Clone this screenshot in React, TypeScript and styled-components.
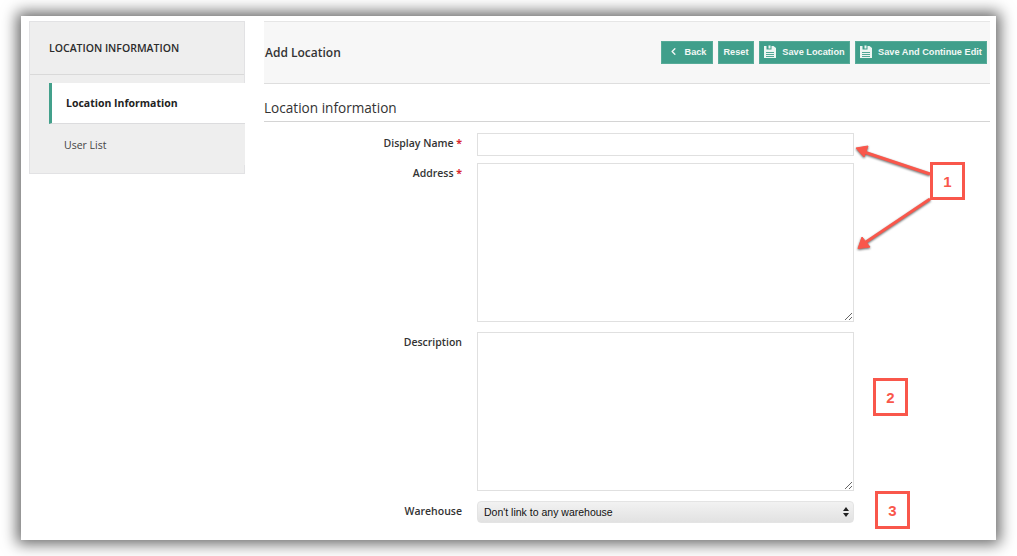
import styled, { createGlobalStyle } from "styled-components";
import { ChevronLeft } from "lucide-react";

const GlobalStyle = createGlobalStyle`
	html, body {
		margin: 0;
		padding: 0;
		background: #fff;
	}
	* {
		box-sizing: border-box;
	}
`;

const SaveIcon = () => (
	<svg width="12" height="13" viewBox="0 0 12 13" fill="none">
		<path d="M0 1h2.500v3.500h5V1h2L12 3v10H0z" fill="#eef6f3" />
		<rect x="4.500" y="0.500" width="2" height="3" fill="#eef6f3" />
		<path d="M2 7.500h8M2 9.500h8M2 11.500h8" stroke="#409f8b" strokeWidth="0.9" />
	</svg>
);

const SelectArrows = () => (
	<svg width="6" height="10" viewBox="0 0 6 10">
		<path d="M3 0l3 4H0zM3 10L0 6h6z" fill="#222" />
	</svg>
);

const Arrows = () => (
	<ArrowLayer viewBox="0 0 1017 556">
		<g fill="#f9574b" stroke="#f9574b">
			<line x1="930" y1="174" x2="864" y2="152" strokeWidth="3" />
			<path d="M856 148L868 146L864 157z" strokeWidth="1" />
			<line x1="930" y1="199" x2="866" y2="242" strokeWidth="3" />
			<path d="M858 248.500L862 237L870 247z" strokeWidth="1" />
		</g>
	</ArrowLayer>
);

const App = () => {
	return (
		<Page>
			<GlobalStyle />
			<Frame>
				<Sidebar>
					<SidebarTitle>LOCATION INFORMATION</SidebarTitle>
					<SideList>
						<SideItem $active>Location Information</SideItem>
						<SideItem>User List</SideItem>
					</SideList>
				</Sidebar>
				<Main>
					<TopBar>
						<PageTitle>Add Location</PageTitle>
						<Actions>
							<ActionButton $width={52}>
								<ChevronLeft size={11} strokeWidth={3} />
								<span>Back</span>
							</ActionButton>
							<ActionButton $width={36}>Reset</ActionButton>
							<ActionButton $width={91}>
								<SaveIcon />
								<span>Save Location</span>
							</ActionButton>
							<ActionButton $width={132}>
								<SaveIcon />
								<span>Save And Continue Edit</span>
							</ActionButton>
						</Actions>
					</TopBar>
					<SectionTitle>Location information</SectionTitle>
					<Form>
						<Row $gap={7}>
							<Label>
								Display Name <Required>*</Required>
							</Label>
							<TextInput />
						</Row>
						<Row $gap={10}>
							<Label>
								Address <Required>*</Required>
							</Label>
							<TextBox />
						</Row>
						<Row $gap={10}>
							<Label>Description</Label>
							<TextBox />
						</Row>
						<Row>
							<Label>Warehouse</Label>
							<SelectWrap>
								<Select defaultValue="none">
									<option value="none">Don't link to any warehouse</option>
								</Select>
								<SelectIcon>
									<SelectArrows />
								</SelectIcon>
							</SelectWrap>
						</Row>
					</Form>
				</Main>
				<Arrows />
				<Callout $left={909} $top={146}>1</Callout>
				<Callout $left={852} $top={362}>2</Callout>
				<Callout $left={854} $top={475}>3</Callout>
			</Frame>
		</Page>
	);
};

export default App;

const Page = styled.div`
	width: 1017px;
	height: 556px;
	padding: 16px 0 0 21px;
	overflow: hidden;
	background: #fff;
`;

const Frame = styled.div`
	position: relative;
	display: flex;
	align-items: flex-start;
	gap: 19px;
	width: 975px;
	height: 524px;
	padding: 5px 6px 0 8px;
	background: #fff;
	box-shadow: 0 0 14px 4px rgba(0, 0, 0, 0.6);
	font-family: "Open Sans", "Liberation Sans", sans-serif;
	color: #333;
`;

const Sidebar = styled.aside`
	flex: none;
	width: 216px;
	height: 153px;
	background: #eee;
	border: 1px solid #e2e2e4;
`;

const SidebarTitle = styled.div`
	height: 53px;
	padding-left: 19px;
	border-bottom: 1px solid #d9d9d9;
	font-size: 10.5px;
	font-weight: 600;
	line-height: 52px;
	color: #2b2b2b;
`;

const SideList = styled.ul`
	margin: 8px 0 0 19px;
	padding: 0;
	list-style: none;
`;

const SideItem = styled.li<{ $active?: boolean }>`
	height: 41px;
	padding-left: ${({ $active }) => ($active ? "14px" : "15px")};
	margin-right: -1px;
	font-size: 10.5px;
	line-height: ${({ $active }) => ($active ? "41px" : "43px")};
	font-weight: ${({ $active }) => ($active ? 700 : 400)};
	color: ${({ $active }) => ($active ? "#222" : "#444")};
	background: ${({ $active }) => ($active ? "#fff" : "#eee")};
	border-left: ${({ $active }) => ($active ? "3px solid #43a08b" : "none")};
	border-bottom: ${({ $active }) => ($active ? "1px solid #dcdcde" : "none")};
`;

const Main = styled.main`
	flex: none;
	width: 726px;
`;

const TopBar = styled.header`
	display: flex;
	align-items: center;
	justify-content: space-between;
	height: 63px;
	padding: 0 3px 0 1px;
	background: #f7f7f7;
	border-top: 1px solid #e6e6e6;
	border-bottom: 1px solid #dedede;
`;

const PageTitle = styled.h1`
	margin: 0;
	font-size: 12px;
	font-weight: 600;
	color: #333;
`;

const Actions = styled.div`
	display: flex;
	gap: 5px;
`;

const ActionButton = styled.button<{ $width: number }>`
	display: flex;
	align-items: center;
	justify-content: center;
	gap: 6px;
	width: ${({ $width }) => $width}px;
	height: 23px;
	padding: 0 0 2px;
	background: #409f8b;
	border: 1px solid #56ab98;
	color: #f2f7f5;
	font-family: "Liberation Sans", Arial, sans-serif;
	font-size: 9.2px;
	font-weight: 700;
`;

const SectionTitle = styled.h2`
	margin: 0;
	height: 38px;
	padding-top: 14px;
	border-bottom: 1px solid #d4d4d4;
	font-size: 13.6px;
	font-weight: 400;
	line-height: 20px;
	color: #333;
`;

const Form = styled.form`
	padding-top: 11px;
`;

const Row = styled.div<{ $gap?: number }>`
	display: grid;
	grid-template-columns: 198px 377px;
	column-gap: 15px;
	margin-bottom: ${({ $gap }) => $gap ?? 0}px;
`;

const Label = styled.label`
	padding-top: 3px;
	text-align: right;
	font-size: 10.5px;
	font-weight: 600;
	line-height: 15px;
	color: #333;
`;

const Required = styled.span`
	color: #d9262c;
	font-weight: 700;
`;

const TextInput = styled.input`
	display: block;
	width: 377px;
	height: 23px;
	background: #fff;
	border: 1px solid #e0e0e0;
	outline: none;
`;

const TextBox = styled.textarea`
	display: block;
	width: 377px;
	height: 159px;
	background: #fff;
	border: 1px solid #e0e0e0;
	outline: none;
	resize: vertical;
`;

const SelectWrap = styled.div`
	position: relative;
	width: 377px;
	height: 22px;
`;

const Select = styled.select`
	display: block;
	appearance: none;
	width: 100%;
	height: 100%;
	padding: 0 20px 0 6px;
	background: linear-gradient(#f2f2f2, #e2e2e2);
	border: 1px solid #e4e4e4;
	border-radius: 4px;
	font-family: "Liberation Sans", Arial, sans-serif;
	font-size: 10.5px;
	color: #111;
`;

const SelectIcon = styled.span`
	position: absolute;
	top: 6px;
	right: 5px;
	display: flex;
	pointer-events: none;
`;

const ArrowLayer = styled.svg`
	position: absolute;
	left: -21px;
	top: -16px;
	width: 1017px;
	height: 556px;
	pointer-events: none;
	filter: drop-shadow(0 1px 1px rgba(0, 0, 0, 0.6));
`;

const Callout = styled.div<{ $left: number; $top: number }>`
	position: absolute;
	left: ${({ $left }) => $left}px;
	top: ${({ $top }) => $top}px;
	display: flex;
	align-items: center;
	justify-content: center;
	width: 35px;
	height: 38px;
	background: #fff;
	border: 3px solid #f9574b;
	font-family: "Liberation Sans", Arial, sans-serif;
	font-size: 15px;
	font-weight: 700;
	color: #f9574b;
`;
